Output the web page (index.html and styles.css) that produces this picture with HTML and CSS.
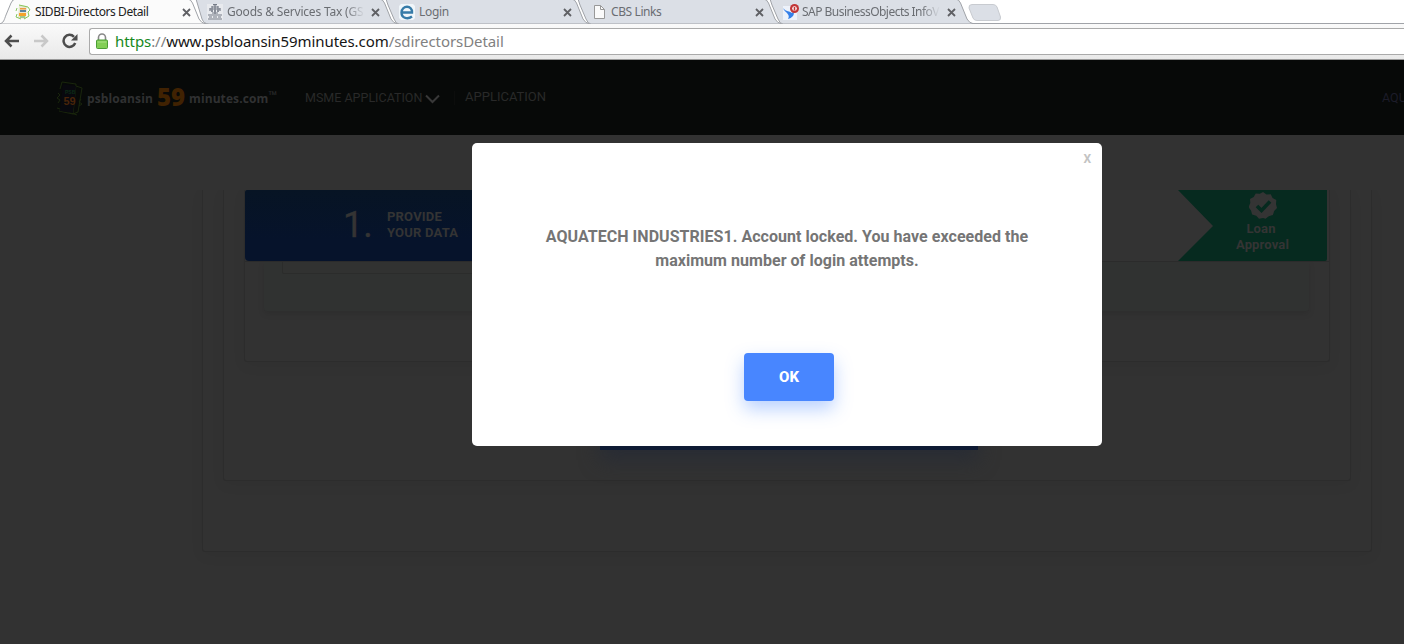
FILE: index.html
```html
<!DOCTYPE html>
<html lang="en">
<head>
<meta charset="utf-8">
<title>SIDBI-Directors Detail</title>
<link rel="stylesheet" href="styles.css">
</head>
<body>
<div class="browser">
  <div class="tabs">
    <div class="tab active">
      <svg class="tab-shape" width="214" height="24" viewBox="0 0 214 24"><path d="M-1 24C4 23 4 20 6 15L11 3Q12.500-1 16-1H187Q191-1 192.500 3L199 19Q201 23 206 24Z" fill="#fbfbfb" stroke="#a0a3a8"/></svg>
      <svg class="favicon" width="16" height="16" viewBox="0 0 16 16"><path d="M4 1l8 1-1 13-8-1z" fill="#e8e7cf"/><path d="M4 1l9 2M2 4l-1 3m1 3l-1 3 5 2M13 3l2 3-2 2 1 4-5 3" fill="none" stroke="#85c65b"/><path d="M5 6h6v2H5z" fill="#5b83a0"/><path d="M4 9h7v3H4z" fill="#f4a32c"/><path d="M5 4h6v1.500H5z" fill="#ed9b45"/><path d="M5 12.500h5v1H5z" fill="#54a64d"/></svg>
      <span class="tab-title t1">SIDBI-Directors Detail</span>
      <svg class="close" width="9" height="9" viewBox="0 0 9 9"><path d="M1 1l7 7M8 1L1 8"/></svg>
    </div>
    <div class="tab">
      <svg class="tab-shape" width="214" height="24" viewBox="0 0 214 24"><path d="M4-1H187Q191-1 192.500 3L199 19Q201 23 206 24H17Q12 24 10 19Z" fill="#dbdfe6" stroke="#a0a3a8"/></svg>
      <svg class="favicon" width="16" height="16" viewBox="0 0 16 16"><path d="M0 0h16v16H0z" fill="#e8eaee"/><path d="M6 .7h4M5 3h6M3 5h10M4 7h2m1 0h2m1 0h2M5 9h6M1 11h14M2 13h3m1 0h4m1 0h3M1 15h14M5 2v6m3-7v9m3-8v6M3 4v3m10-3v3" fill="none" stroke="#747a86" stroke-width="1.200"/></svg>
      <span class="tab-title t2 fade">Goods &amp; Services Tax (GS</span>
      <svg class="close" width="9" height="9" viewBox="0 0 9 9"><path d="M1 1l7 7M8 1L1 8"/></svg>
    </div>
    <div class="tab">
      <svg class="tab-shape" width="214" height="24" viewBox="0 0 214 24"><path d="M4-1H187Q191-1 192.500 3L199 19Q201 23 206 24H15Q12 24 10 19L4 5 2-1Z" fill="#dbdfe6" stroke="#a0a3a8"/></svg>
      <svg class="favicon" width="16" height="16" viewBox="0 0 16 16"><path d="M2 0h12l2 2v12l-2 2H2l-2-2V2z" fill="#f0f6fa"/><path d="M3 8.500H13C13.500 1 3 .5 2.500 8.500 2.500 14.500 9 15.500 13 12.500" fill="none" stroke="#367ba8" stroke-width="2.400"/></svg>
      <span class="tab-title t3">Login</span>
      <svg class="close" width="9" height="9" viewBox="0 0 9 9"><path d="M1 1l7 7M8 1L1 8"/></svg>
    </div>
    <div class="tab">
      <svg class="tab-shape" width="214" height="24" viewBox="0 0 214 24"><path d="M4-1H187Q191-1 192.500 3L199 19Q201 23 206 24H15Q12 24 10 19L4 5 2-1Z" fill="#dbdfe6" stroke="#a0a3a8"/></svg>
      <svg class="favicon" width="16" height="16" viewBox="0 0 16 16"><path d="M3.500 1.500h6l4 4v9h-10z" fill="#fafafa" stroke="#989898"/><path d="M9.500 1.500v4h4" fill="none" stroke="#989898"/></svg>
      <span class="tab-title t4">CBS Links</span>
      <svg class="close" width="9" height="9" viewBox="0 0 9 9"><path d="M1 1l7 7M8 1L1 8"/></svg>
    </div>
    <div class="tab">
      <svg class="tab-shape" width="214" height="24" viewBox="0 0 214 24"><path d="M4-1H187Q191-1 192.500 3L199 19Q201 23 206 24H15Q12 24 10 19L4 5 2-1Z" fill="#dbdfe6" stroke="#a0a3a8"/></svg>
      <svg class="favicon" width="16" height="16" viewBox="0 0 16 16"><path d="M0 2h14v14H0z" fill="#edf2fa"/><path d="M0 4c3 4 7 3 9 5l1.500-1.500C12 11 9 14 5 15c3-5-3-6-5-11" fill="#347fe8"/><circle cx="11.500" cy="4.500" r="4.500" fill="#c23536"/><circle cx="11.500" cy="4.500" r="2.300" fill="#fff"/><path d="M11.500 3v3.500" stroke="#c23536" stroke-width="1.600"/></svg>
      <span class="tab-title t5 fade">SAP BusinessObjects InfoV</span>
      <svg class="close" width="9" height="9" viewBox="0 0 9 9"><path d="M1 1l7 7M8 1L1 8"/></svg>
    </div>
    <svg class="new-tab" width="34" height="17" viewBox="0 0 34 17"><path d="M4 .5H25Q28 .5 29 3L32.500 13Q33 16.500 30 16.500H9Q6 16.500 5 14L1 4Q.5 .5 4 .5Z" fill="#dbdfe6" stroke="#c8cbd0"/></svg>
  </div>
  <div class="toolbar">
    <svg width="16" height="14" viewBox="0 0 16 14"><path d="M15 7H2M7.500 1.500L2 7l5.500 5.500" fill="none" stroke="#4d4d4d" stroke-width="2.500"/></svg>
    <svg width="16" height="14" viewBox="0 0 16 14"><path d="M1 7h13M8.500 1.500L14 7l-5.500 5.500" fill="none" stroke="#c8c8c8" stroke-width="2.500"/></svg>
    <svg width="16" height="16" viewBox="0 0 16 16"><path d="M13.200 10A6 6 0 1 1 12 3.800" fill="none" stroke="#4d4d4d" stroke-width="2.500"/><path d="M15.500 1v6.500H9z" fill="#4d4d4d"/></svg>
    <div class="address">
      <svg width="12" height="16" viewBox="0 0 12 16"><path d="M2.500 8V4.500a3.500 3.500 0 0 1 7 0V8" fill="none" stroke="#888" stroke-width="1.600"/><rect x=".5" y="7" width="11" height="8.500" rx="1" fill="#82ce55" stroke="#4b9e35"/><path d="M1.500 9h9" stroke="#a8e286"/></svg>
      <span class="url"><b>https</b><i>://</i>www.psbloansin59minutes.com<i>/sdirectorsDetail</i></span>
    </div>
  </div>
</div>
<div class="page">
  <header class="nav">
    <div class="brand">
      <svg class="logo" width="30" height="36" viewBox="0 0 30 36"><g fill="none" stroke="#19260c"><path d="M5 8L7 1l14 2-3 30-14-3M21 5l6 2-4 24-5 2M2 27l20 7M3 12l2 2-3 3 3 2-2 3M26 18l-2 3 3 2-3 2"/></g><path d="M8 3l13 2-3 27-13-2z" fill="#08080e"/><text x="10" y="12.500" class="logo-psb">PSB</text><text x="8.500" y="23.500" class="logo-num">59</text></svg>
      <span class="name n1">psbloansin</span><span class="big">59</span><span class="name n2">minutes.com</span><span class="tm">™</span>
    </div>
    <span class="menu m1">MSME APPLICATION</span>
    <svg class="chevron" width="15" height="10" viewBox="0 0 15 10"><path d="M1 1.500l6.500 6.500L14 1.500" fill="none" stroke="#383838" stroke-width="2"/></svg>
    <span class="divider"></span>
    <span class="menu m2">APPLICATION</span>
    <span class="account">AQU</span>
  </header>
  <main class="card outer">
    <section class="card middle">
      <div class="card inner">
        <div class="steps">
          <div class="step-one"><span class="step-num">1.</span><span class="step-text">PROVIDE<br>YOUR DATA</span></div>
          <div class="step-last">
            <svg class="arrow" width="149" height="71" viewBox="0 0 149 71"><path d="M0 0H149V69Q149 71 147 71H0L35 36Z" fill="#062a1f"/></svg>
            <svg class="badge" width="28" height="28" viewBox="0 0 28 28"><path d="M14 0l3.500 2.500 4.200-.3 1.900 3.800 3.700 2-.3 4.300 1 3.700-2.800 3-1.300 4-4.100 1.200-3.300 2.600L14 26l-4 .8-2.800-3-4.100-1.300L2 18.400-.5 15 1.300 11 1 7l3.700-2 2-3.500 4.200.3z" fill="#343434"/><path d="M8 14l4.500 4.500 8.500-9" fill="none" stroke="#062a1f" stroke-width="3.600"/></svg>
            <span class="step-label"><span class="loan">Loan</span><br>Approval</span>
          </div>
        </div>
        <div class="panel"><div class="panel-box"></div></div>
      </div>
      <div class="submit"></div>
    </section>
  </main>
  <div class="modal">
    <span class="dismiss">X</span>
    <p class="message">AQUATECH INDUSTRIES1. Account locked. You have exceeded the<br>maximum number of login attempts.</p>
    <button class="ok">OK</button>
  </div>
</div>
</body>
</html>
```
FILE: styles.css
```css
* { box-sizing: border-box; }
body { margin: 0; width: 1404px; height: 644px; overflow: hidden; background: #323232; font-family: Roboto, "Liberation Sans", sans-serif; }

/* Browser window */
.browser { height: 60px; background: #f4f4f4; font-family: "Noto Sans", "Open Sans", sans-serif; }
.tabs { display: flex; height: 24px; background: #fff; border-bottom: 1px solid #a0a3a8; }
.tab { position: relative; flex: none; width: 192px; height: 24px; display: flex; align-items: center; padding-left: 15px; color: #6a6d72; }
.tab.active { z-index: 2; color: #222; }
.tab-shape { position: absolute; left: 0; top: 0; }
.favicon { position: relative; flex: none; }
.tab-title { position: relative; width: 138px; margin-left: 4px; font-size: 12px; line-height: 24px; white-space: nowrap; }
.active .tab-title { width: 141px; }
.t1 { letter-spacing: -.41px; }
.t2 { letter-spacing: -.2px; }
.t3 { letter-spacing: -.3px; }
.t4 { letter-spacing: -.4px; }
.t5 { letter-spacing: -.52px; left: -1px; }
.fade { -webkit-mask-image: linear-gradient(90deg, #000 86%, transparent); mask-image: linear-gradient(90deg, #000 86%, transparent); }
.close { position: relative; margin-left: 6px; flex: none; fill: none; stroke: #5f6064; stroke-width: 1.8; }
.new-tab { margin: 4px 0 0 8px; }
.toolbar { display: flex; align-items: center; height: 36px; padding: 0 0 1px 5px; gap: 13px; background: linear-gradient(#fafafa, #e9e9e9); border-bottom: 1px solid #999; }
.toolbar > svg { position: relative; left: -1px; }
.address { display: flex; align-items: center; flex: 1; height: 27px; margin-left: -3px; padding-left: 6px; gap: 7px; background: #fff; border: 1px solid #aaa; border-right: 0; border-radius: 3px 0 0 3px; }
.url { font-size: 15px; line-height: 24px; letter-spacing: -.07px; color: #151515; white-space: nowrap; }
.url b { font-weight: 400; color: #17891d; }
.url i { font-style: normal; color: #818181; }

/* Dimmed site */
.page { position: relative; height: 584px; overflow: hidden; }
.nav { display: flex; align-items: center; height: 75px; padding-left: 55px; background: #070908; color: #292929; white-space: nowrap; }
.brand { display: flex; align-items: center; width: 250px; font-family: "Open Sans", "Noto Sans", sans-serif; font-weight: 700; }
.logo { margin-top: 3px; }
.logo-psb { font: 700 5px "Liberation Sans", sans-serif; fill: #0c2c16; }
.logo-num { font: 700 11px "Liberation Sans", sans-serif; fill: #482409; }
.name { font-size: 12px; line-height: 20px; letter-spacing: .1px; color: #303132; margin-top: 3px; }
.n1 { margin-left: 2px; width: 67px; }
.big { width: 29px; margin: 0 3px; font-size: 24px; font-weight: 800; line-height: 30px; margin-bottom: 2px; color: #402202; }
.tm { font-size: 11px; font-weight: 700; line-height: 12px; color: #2c2d2e; margin-bottom: 6px; }
.menu { line-height: 18px; }
.m1 { width: 120px; font-size: 12.5px; }
.chevron { margin-top: 3px; }
.divider { width: 1px; height: 14px; margin-left: 14px; background: #0c0d0c; }
.m2 { margin: 0 0 2px 10px; font-size: 13px; }
.account { margin-left: auto; width: 22px; font-size: 12.5px; color: #1c1c29; }
.card { border: 1px solid #2c2c2c; border-top: 0; border-radius: 0 0 3px 3px; box-shadow: 0 4px 14px rgba(0, 0, 0, .05); clip-path: inset(0 -24px -24px -24px); }
.outer { width: 1170px; height: 362px; margin: 55px 0 0 202px; padding: 0 20px; }
.middle { height: 291px; padding: 0 20px; }
.inner { height: 172px; }
.steps { position: relative; display: flex; justify-content: space-between; height: 71px; padding-right: 2px; background: #333; box-shadow: 0 1px 0 #2b2b2b; }
.step-one { display: flex; align-items: center; width: 520px; padding-left: 98px; background: linear-gradient(#071424, #06132b 70%); border-radius: 2px 0 0 4px; color: #343434; }
.step-num { width: 44px; font-size: 36px; line-height: 42px; padding-bottom: 2px; -webkit-text-stroke: .4px #343434; }
.step-text { font-size: 13px; font-weight: 700; line-height: 16px; letter-spacing: .2px; padding-bottom: 2px; }
.step-last { position: relative; display: flex; flex-direction: column; align-items: center; width: 149px; padding: 2px 0 0 20px; color: #343434; }
.arrow { position: absolute; left: 0; top: 0; }
.badge, .step-label { position: relative; }
.step-label { margin-top: 1px; font-size: 13px; font-weight: 700; line-height: 16px; letter-spacing: .15px; text-align: center; }
.loan { margin-right: 3px; }
.panel { height: 50px; margin: 0 20px 0 19px; padding: 0 18px; background: #303231; border-radius: 0 0 3px 3px; box-shadow: 0 3px 6px rgba(0, 0, 0, .1); }
.panel-box { width: 500px; height: 13px; background: #313231; border: 1px solid #2b2c2b; border-top: 0; border-radius: 0 0 2px 2px; }
.submit { width: 378px; height: 48px; margin: 40px 0 0 356px; background: #0e1a33; box-shadow: 0 10px 20px #282c35; }

/* Account notice */
.modal { position: absolute; left: 472px; top: 83px; width: 630px; height: 303px; display: flex; flex-direction: column; align-items: center; background: #fff; border-radius: 5px; }
.dismiss { align-self: flex-end; margin: 7px 11px 0 0; font-size: 12px; font-weight: 700; line-height: 18px; color: #c3c3c3; }
.message { margin: 57px 0 0; font-size: 16px; font-weight: 700; line-height: 24px; letter-spacing: .04px; text-align: center; color: #757575; white-space: nowrap; }
.ok { width: 90px; height: 48px; margin: 80px 0 0 4px; padding: 0; border: 0; border-radius: 4px; background: #4886ff; color: #fff; font: 800 15px Roboto, sans-serif; box-shadow: 0 8px 18px rgba(72, 134, 255, .38); }
```
